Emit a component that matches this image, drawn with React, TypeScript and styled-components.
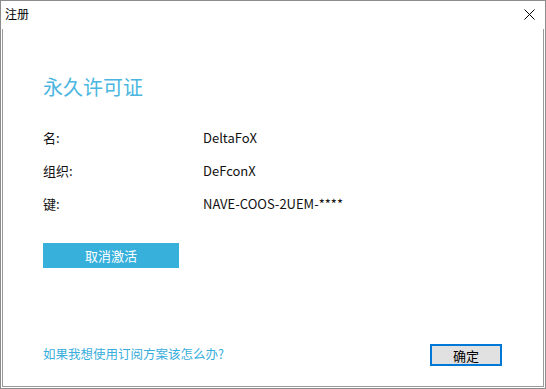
import React from "react";
import styled, { createGlobalStyle } from "styled-components";

const Global = createGlobalStyle`
  html, body { margin: 0; padding: 0; background: #ffffff; }
  body { font-family: "Noto Sans CJK SC", "Noto Sans", sans-serif; }
  * { box-sizing: border-box; }
`;

const Frame = styled.div`
  width: 546px;
  height: 389px;
  border: 1px solid #8c8c8c;
  background: #fff;
  display: flex;
  flex-direction: column;
`;

const Inner = styled.div`
  flex: 1;
  margin: 0 1px 1px 1px;
  border-left: 1px solid #9a9a9a;
  border-right: 1px solid #9a9a9a;
  border-bottom: 1px solid #9a9a9a;
  display: flex;
  flex-direction: column;
`;

const TitleBar = styled.div`
  height: 28px;
  display: flex;
  align-items: center;
  justify-content: space-between;
  padding: 0 0 0 4px;
`;

const Title = styled.div`
  font-size: 12px;
  color: #000;
  line-height: 1;
  margin-top: -2px;
`;

const CloseBtn = styled.div`
  width: 22px;
  height: 28px;
  display: flex;
  align-items: center;
  justify-content: center;
  margin-right: 5px;
  margin-top: -2px;
`;

const Body = styled.div`
  flex: 1;
  display: flex;
  flex-direction: column;
  padding: 0 41px 0 40px;
`;

const Heading = styled.h1`
  margin: 44px 0 0 0;
  font-size: 20px;
  font-weight: 400;
  color: #4bb6e0;
  line-height: 28px;
`;

const Rows = styled.div`
  margin-top: 27px;
  display: flex;
  flex-direction: column;
  gap: 14px;
`;

const Row = styled.div`
  display: grid;
  grid-template-columns: 160px 1fr;
  font-size: 13px;
  color: #111;
  line-height: 19px;
`;

const Action = styled.button`
  margin-top: 30px;
  width: 136px;
  height: 25px;
  border: none;
  background: #37b0dc;
  color: #fff;
  font-family: inherit;
  font-size: 13px;
  padding: 0;
  display: flex;
  align-items: center;
  justify-content: center;
`;

const Footer = styled.div`
  margin-top: auto;
  margin-bottom: 20px;
  display: flex;
  align-items: center;
  justify-content: space-between;
`;

const Link = styled.a`
  font-size: 12.5px;
  color: #37aedc;
  text-decoration: none;
  margin-top: -4px;
`;

const OkBtn = styled.button`
  width: 72px;
  height: 22px;
  border: 2px solid #0078d7;
  background: #e1e1e1;
  color: #000;
  font-family: inherit;
  font-size: 13px;
  padding: 0;
  display: flex;
  align-items: center;
  justify-content: center;
`;

const rows = [
  ["名:", "DeltaFoX"],
  ["组织:", "DeFconX"],
  ["键:", "NAVE-COOS-2UEM-****"],
];

export default function App() {
  return (
    <>
      <Global />
      <Frame>
        <TitleBar>
          <Title>注册</Title>
          <CloseBtn>
            <svg width="11" height="11" viewBox="0 0 11 11">
              <path d="M0.5 0.5 L10.5 10.5 M10.5 0.5 L0.5 10.5" stroke="#000" strokeWidth="1" />
            </svg>
          </CloseBtn>
        </TitleBar>
        <Inner>
          <Body>
            <Heading>永久许可证</Heading>
            <Rows>
              {rows.map(([k, v]) => (
                <Row key={k}>
                  <span>{k}</span>
                  <span>{v}</span>
                </Row>
              ))}
            </Rows>
            <Action>取消激活</Action>
            <Footer>
              <Link href="#">如果我想使用订阅方案该怎么办?</Link>
              <OkBtn>确定</OkBtn>
            </Footer>
          </Body>
        </Inner>
      </Frame>
    </>
  );
}
